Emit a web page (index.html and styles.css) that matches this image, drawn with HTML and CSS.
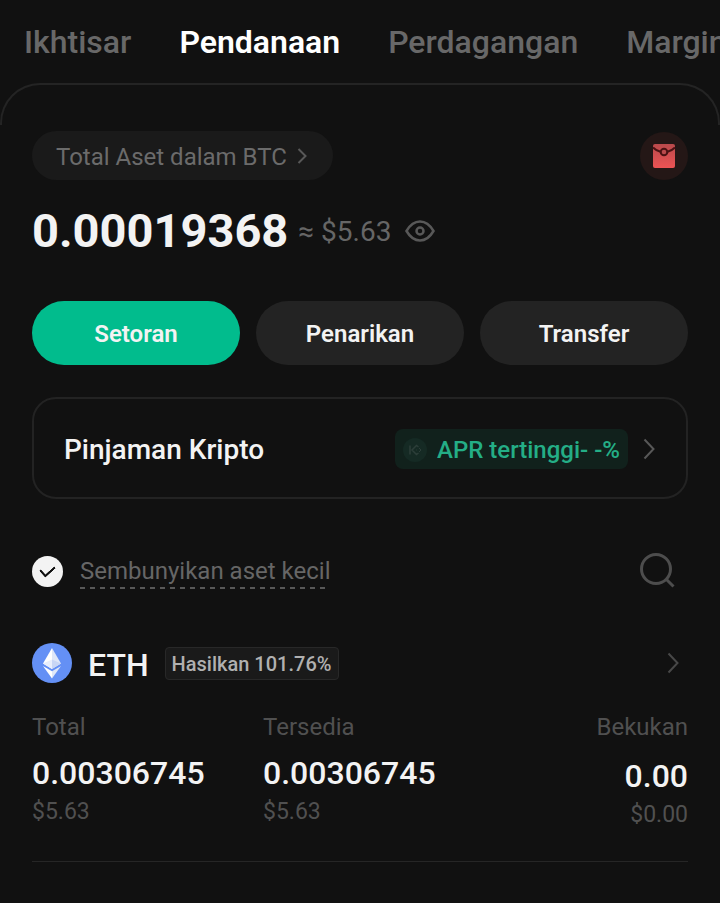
FILE: index.html
```html
<!DOCTYPE html>
<html lang="id">
	<head>
		<meta charset="UTF-8">
		<meta name="viewport" content="width=device-width, initial-scale=1">
		<title>Pendanaan</title>
		<link rel="stylesheet" href="styles.css">
	</head>
	<body>
		<nav class="tabs">
			<a href="#">Ikhtisar</a>
			<a href="#" class="active">Pendanaan</a>
			<a href="#">Perdagangan</a>
			<a href="#">Margin</a>
		</nav>
		<main class="panel">
			<div class="top">
				<button type="button" class="unit">
					Total Aset dalam BTC
					<svg width="10" height="18" viewBox="0 0 10 18"><path d="M1.500 1L8.500 8L1.500 15"/></svg>
				</button>
				<button type="button" class="gift" aria-label="Hadiah">
					<svg width="24" height="26" viewBox="0 0 24 26">
						<defs>
							<linearGradient id="red" x1="0" y1="0" x2="0" y2="1">
								<stop offset="0" stop-color="#b94a4c"/>
								<stop offset="1" stop-color="#ec5354"/>
							</linearGradient>
						</defs>
						<rect x="1" y="1" width="22" height="24" rx="2" fill="url(#red)"/>
						<path d="M1 4.500Q4 7.500 8.500 8.800M23 4.500Q20 7.500 15.500 8.800" fill="none" stroke="#4b1213" stroke-width="2"/>
						<circle cx="12" cy="9" r="3.300" fill="#b94a4c" stroke="#4b1213" stroke-width="2"/>
					</svg>
				</button>
			</div>

			<div class="balance">
				<strong>0.00019368</strong>
				<span>≈ $5.63</span>
				<button type="button" class="eye" aria-label="Sembunyikan saldo">
					<svg width="30" height="22" viewBox="0 0 30 22">
						<path d="M1.500 11Q7 1.500 15 1.500T28.500 11Q23 20.500 15 20.500T1.500 11Z"/>
						<circle cx="15" cy="11" r="3.500"/>
					</svg>
				</button>
			</div>

			<div class="actions">
				<button type="button" class="primary">Setoran</button>
				<button type="button">Penarikan</button>
				<button type="button">Transfer</button>
			</div>

			<a href="#" class="loan">
				<span class="loan-name">Pinjaman Kripto</span>
				<span class="apr">
					<svg width="24" height="24" viewBox="0 0 24 24">
						<circle cx="12" cy="12" r="12" fill="#152a24"/>
						<path d="M7 7.500V16.500M15.500 9L13.500 7.500L9 12L13.500 16.500L15.500 15M13.500 12H14" fill="none" stroke="#2c3e39" stroke-width="1.500"/>
						<path d="M16 10L18 12L16 14" fill="none" stroke="#2c3e39" stroke-width="1"/>
					</svg>
					APR tertinggi- -%
				</span>
				<svg class="arrow" width="12" height="22" viewBox="0 0 12 22"><path d="M1.500 1.500L10.500 11L1.500 20.500"/></svg>
			</a>

			<div class="filter">
				<input type="checkbox" id="small" checked>
				<label for="small">Sembunyikan aset kecil</label>
				<button type="button" class="search" aria-label="Cari">
					<svg width="36" height="36" viewBox="0 0 36 36">
						<circle cx="16" cy="16" r="14.500"/>
						<path d="M26.500 26.500L33.500 33.500"/>
					</svg>
				</button>
			</div>

			<section class="asset">
				<a href="#" class="asset-head">
					<svg class="coin" width="40" height="40" viewBox="0 0 40 40">
						<circle cx="20" cy="20" r="20" fill="#6490f5"/>
						<path d="M20 5L11 20.500L20 26Z" fill="#fff"/>
						<path d="M20 5L29 20.500L20 26Z" fill="#dfe7f8"/>
						<path d="M11 20.500L20 16.500V26Z" fill="#e9effc"/>
						<path d="M29 20.500L20 16.500V26Z" fill="#c8d6f5"/>
						<path d="M11 23L20 28.300V35.500Z" fill="#fff"/>
						<path d="M29 23L20 28.300V35.500Z" fill="#dfe7f8"/>
					</svg>
					<span class="symbol">ETH</span>
					<span class="earn">Hasilkan 101.76%</span>
					<svg class="arrow" width="12" height="22" viewBox="0 0 12 22"><path d="M1.500 1.500L10.500 11L1.500 20.500"/></svg>
				</a>
				<dl class="amounts">
					<div>
						<dt>Total</dt>
						<dd class="value">0.00306745</dd>
						<dd>$5.63</dd>
					</div>
					<div>
						<dt>Tersedia</dt>
						<dd class="value">0.00306745</dd>
						<dd>$5.63</dd>
					</div>
					<div class="frozen">
						<dt>Bekukan</dt>
						<dd class="value">0.00</dd>
						<dd>$0.00</dd>
					</div>
				</dl>
			</section>
		</main>
	</body>
</html>
```
FILE: styles.css
```css
*{
	box-sizing: border-box;
}
body{
	margin: 0;
	background: #111;
	color: #f3f3f3;
	font-family: Roboto, "Liberation Sans", sans-serif;
	font-size: 24px;
	line-height: 32px;
}
a{
	color: inherit;
	text-decoration: none;
}
button{
	padding: 0;
	border: 0;
	background: none;
	color: inherit;
	font: inherit;
	cursor: pointer;
}
svg{
	display: block;
	flex: none;
}

/* tabs */
.tabs{
	display: flex;
	gap: 48px;
	padding: 22px 0 21px 24px;
	overflow: hidden;
	white-space: nowrap;
	font-size: 32px;
	font-weight: 500;
	line-height: 40px;
	color: #686868;
}
.tabs .active{
	color: #fff;
	font-weight: 600;
}

.panel{
	position: relative;
	padding: 48px 32px 40px;
}
/* rounded top edge, stops below the corners */
.panel::before{
	content: "";
	position: absolute;
	top: 0;
	left: 0;
	right: 0;
	height: 40px;
	border: 2px solid #242424;
	border-bottom: 0;
	border-radius: 40px 40px 0 0;
	pointer-events: none;
}
.top{
	display: flex;
	justify-content: space-between;
	align-items: center;
}
.unit{
	display: flex;
	align-items: center;
	gap: 10px;
	height: 49px;
	padding: 2px 26px 0 24px;
	border-radius: 25px;
	background: #1a1a1a;
	color: #6b6b6b;
}
.unit svg, .eye svg, .search svg, .arrow{
	fill: none;
	stroke: #585858;
	stroke-width: 2;
}
.gift{
	display: flex;
	justify-content: center;
	align-items: center;
	width: 48px;
	height: 48px;
	border-radius: 50%;
	background: #241716;
}

.balance{
	display: flex;
	align-items: center;
	margin-top: 23px;
}
.balance strong{
	font-size: 47px;
	font-weight: 700;
	line-height: 56px;
}
.balance span{
	margin: 2px 14px 0 10px;
	font-size: 28px;
	color: #666;
}
.eye svg{
	stroke-width: 2.5;
}

.actions{
	display: grid;
	grid-template-columns: repeat(3, 1fr);
	gap: 16px;
	margin-top: 42px;
}
.actions button{
	height: 64px;
	padding-top: 2px;
	border-radius: 32px;
	background: #232323;
	font-weight: 600;
}
.actions .primary{
	background: #01bc8d;
}

.loan{
	display: flex;
	align-items: center;
	height: 102px;
	margin-top: 32px;
	padding: 2px 31px 0 30px;
	border: 2px solid #232323;
	border-radius: 24px;
}
.loan-name{
	margin-right: auto;
	padding-top: 2px;
	font-size: 28px;
	font-weight: 500;
}
.apr{
	display: flex;
	align-items: center;
	gap: 10px;
	height: 40px;
	margin-right: 15px;
	padding: 2px 8px 0;
	border-radius: 8px;
	background: #11211c;
	color: #24ae86;
	font-weight: 500;
}
.arrow{
	margin-left: auto;
}
.loan .arrow{
	margin-left: 0;
}

.filter{
	display: flex;
	align-items: center;
	margin-top: 54px;
	color: #666;
}
.filter input{
	appearance: none;
	width: 31px;
	height: 31px;
	margin: 0 17px 0 0;
	border-radius: 50%;
	background: #f3f3f3;
	display: grid;
	place-items: center;
}
/* tick */
.filter input:checked::before{
	content: "";
	width: 14px;
	height: 8px;
	margin-bottom: 4px;
	border: solid #111;
	border-width: 0 0 3px 3px;
	border-radius: 1px;
	transform: rotate(-42deg) scale(0.85);
}
.filter label{
	padding: 2px 0;
	background: repeating-linear-gradient(90deg, #585858 0 5px, transparent 5px 10px) left bottom / 100% 2px no-repeat;
}
.search{
	margin-left: auto;
	margin-right: 12px;
}
.search svg{
	stroke: #4d4d4d;
	stroke-width: 3;
}

.asset{
	margin-top: 54px;
	padding-bottom: 30px;
	border-bottom: 1px solid #262626;
}
.asset-head{
	display: flex;
	align-items: center;
	padding-right: 9px;
}
.asset-head .arrow{
	stroke: #484848;
}
.symbol{
	margin: 4px 16px 0 16px;
	font-size: 32px;
	font-weight: 500;
}
.earn{
	padding: 1px 6px 0;
	border: 1px solid #282828;
	border-radius: 4px;
	background: #1a1a1a;
	color: #b0b0b0;
	font-size: 20px;
	font-weight: 500;
	line-height: 30px;
}
.amounts{
	display: grid;
	grid-template-columns: 231px 1fr auto;
	margin: 28px 0 0;
	color: #505050;
}
.amounts dd{
	margin: 0;
	font-size: 23px;
}
.amounts dt{
	margin-bottom: 10px;
}
.amounts .value{
	margin-bottom: 3px;
	color: #f3f3f3;
	font-size: 32px;
	font-weight: 500;
	line-height: 40px;
}
.frozen{
	text-align: right;
}
.frozen dt{
	margin-bottom: 13px;
}
```
